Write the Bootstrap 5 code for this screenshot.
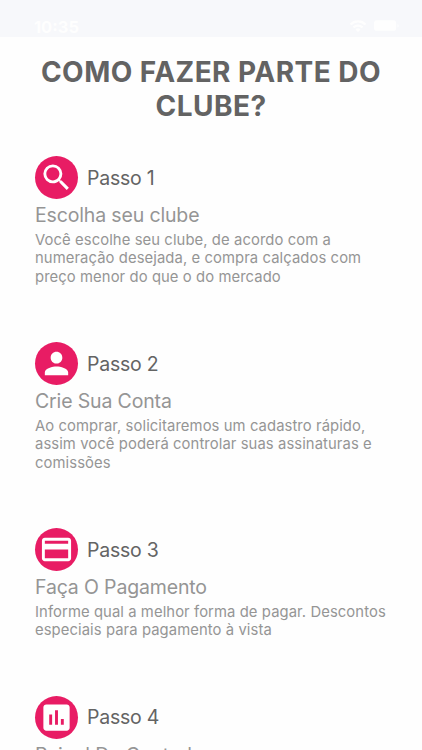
<!DOCTYPE html>
<html lang="pt-BR">
<head>
<meta charset="utf-8">
<meta name="viewport" content="width=device-width, initial-scale=1">
<title>Como fazer parte do clube?</title>
<link href="https://cdn.jsdelivr.net/npm/bootstrap@5.3.0/dist/css/bootstrap.min.css" rel="stylesheet">
<style>
html, body { height: 750px; overflow: hidden; }
body { font-family: Inter, "Liberation Sans", sans-serif; background: #fefefe; color: #636363; }
.statusbar { height: 37px; background: #f7f8fb; color: #fefefe; padding: 17px 22px 0 34px; }
.clock { font-size: 16.5px; font-weight: 700; line-height: 21px; }
.signals { gap: 7px; height: 18px; }
.headline { font-size: 28px; font-weight: 700; line-height: 33.5px; letter-spacing: .47px; margin: 19px 0 33px; color: #636363; }
.steps { padding: 0 30px 0 35px; }
.step { margin-bottom: 56px; }
.step-icon { width: 43px; height: 43px; background: #e81c64; color: #fff; }
.step-name { font-size: 19.5px; line-height: 24px; letter-spacing: -.22px; margin-left: 9px; color: #646464; }
.step-title { font-size: 19.5px; line-height: 24px; font-weight: 400; letter-spacing: -.15px; margin: 4px 0 3.5px; color: #959595; }
.step-text { font-size: 14.8px; line-height: 18.5px; letter-spacing: .09px; color: #959595; }
</style>
<script src="https://cdn.jsdelivr.net/npm/bootstrap@5.3.0/dist/js/bootstrap.bundle.min.js"></script>
</head>
<body>
<header class="statusbar d-flex justify-content-between align-items-start">
  <span class="clock">10:35</span>
  <div class="signals d-flex align-items-center">
    <svg width="18" height="12" viewBox="0 0 17 12" fill="none" stroke="currentColor" stroke-width="2.2"><path d="M1 4.500a10.600 10.600 0 0 1 15 0M4 7.400a6.400 6.400 0 0 1 9 0"/><path d="M8.500 12l-2.400-2.600a3.500 3.500 0 0 1 4.800 0z" fill="currentColor" stroke="none"/></svg>
    <svg width="26" height="12" viewBox="0 0 27 12" fill="currentColor"><rect width="23" height="11" rx="3"/><path d="M24.500 4c1.500.5 1.500 3 0 3.500z"/></svg>
  </div>
</header>
<main>
  <h1 class="headline text-center">COMO FAZER PARTE DO<br>CLUBE?</h1>
  <div class="steps">
    <section class="step">
      <div class="d-flex align-items-center">
        <span class="step-icon rounded-circle d-flex align-items-center justify-content-center flex-shrink-0"><svg width="35" height="35" viewBox="0 0 24 24" fill="currentColor"><path d="M15.500 14h-.79l-.28-.27A6.471 6.471 0 0 0 16 9.500 6.500 6.500 0 1 0 9.500 16c1.610 0 3.090-.59 4.230-1.570l.27.28v.79l5 4.990L20.490 19l-4.990-5zm-6 0C7.010 14 5 11.990 5 9.500S7.010 5 9.500 5 14 7.010 14 9.500 11.990 14 9.500 14z"/></svg></span>
        <span class="step-name">Passo 1</span>
      </div>
      <h2 class="step-title">Escolha seu clube</h2>
      <p class="step-text text-nowrap mb-0">Você escolhe seu clube, de acordo com a<br>numeração desejada, e compra calçados com<br>preço menor do que o do mercado</p>
    </section>
    <section class="step">
      <div class="d-flex align-items-center">
        <span class="step-icon rounded-circle d-flex align-items-center justify-content-center flex-shrink-0"><svg width="35" height="35" viewBox="0 0 24 24" fill="currentColor"><path d="M12 12c2.210 0 4-1.790 4-4s-1.790-4-4-4-4 1.790-4 4 1.790 4 4 4zm0 2c-2.670 0-8 1.340-8 4v2h16v-2c0-2.660-5.330-4-8-4z"/></svg></span>
        <span class="step-name">Passo 2</span>
      </div>
      <h2 class="step-title">Crie Sua Conta</h2>
      <p class="step-text text-nowrap mb-0">Ao comprar, solicitaremos um cadastro rápido,<br>assim você poderá controlar suas assinaturas e<br>comissões</p>
    </section>
    <section class="step">
      <div class="d-flex align-items-center">
        <span class="step-icon rounded-circle d-flex align-items-center justify-content-center flex-shrink-0"><svg width="35" height="35" viewBox="0 0 24 24" fill="currentColor"><path d="M20 4H4c-1.110 0-1.990.89-1.990 2L2 18c0 1.110.89 2 2 2h16c1.110 0 2-.89 2-2V6c0-1.110-.89-2-2-2zm0 14H4v-6h16v6zm0-10H4V6h16v2z"/></svg></span>
        <span class="step-name">Passo 3</span>
      </div>
      <h2 class="step-title">Faça O Pagamento</h2>
      <p class="step-text text-nowrap mb-0">Informe qual a melhor forma de pagar. Descontos<br>especiais para pagamento à vista</p>
    </section>
    <section class="step">
      <div class="d-flex align-items-center">
        <span class="step-icon rounded-circle d-flex align-items-center justify-content-center flex-shrink-0"><svg width="35" height="35" viewBox="0 0 24 24" fill="currentColor"><path d="M19 3H5c-1.100 0-2 .9-2 2v14c0 1.100.9 2 2 2h14c1.100 0 2-.9 2-2V5c0-1.100-.9-2-2-2zM9 17H7v-7h2v7zm4 0h-2V7h2v10zm4 0h-2v-4h2v4z"/></svg></span>
        <span class="step-name">Passo 4</span>
      </div>
      <h2 class="step-title">Painel De Controle</h2>
    </section>
  </div>
</main>
</body>
</html>
